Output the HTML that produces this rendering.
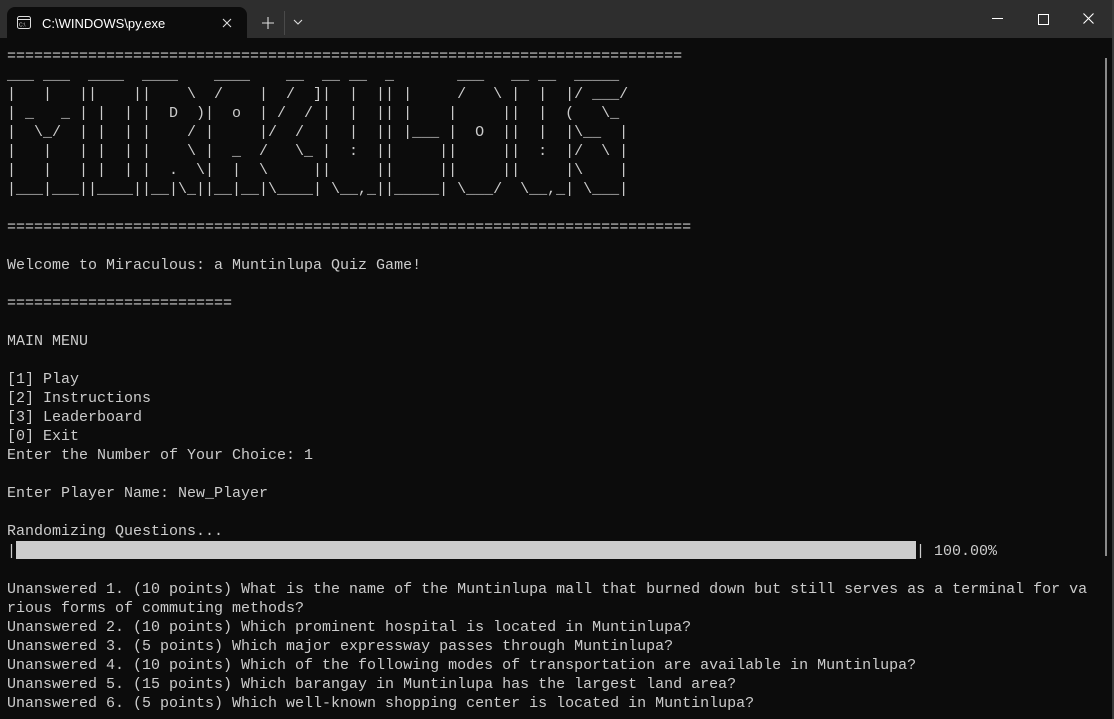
<!DOCTYPE html>
<html><head><meta charset="utf-8"><style>
html,body{margin:0;padding:0;background:#0c0c0c;width:1114px;height:719px;overflow:hidden}
.tb{position:absolute;left:0;top:0;width:1114px;height:38px;background:#2e2e2e}
.tab{position:absolute;left:7px;top:7px;width:240px;height:31px;background:#0c0c0c;border-radius:8px 8px 0 0}
.tt{position:absolute;left:42px;top:15px;font:13px "Liberation Sans",sans-serif;color:#fff}
pre{position:absolute;left:7px;top:47px;margin:0;font:15px/19px "Liberation Mono",monospace;color:#cccccc;white-space:pre}
.bar{display:inline-block;width:900px;height:18px;background:#cccccc;vertical-align:-4px}
</style></head><body>
<div class="tb">
<div class="tab">
<svg style="position:absolute;left:10px;top:9px" width="14" height="13" viewBox="0 0 14 13"><rect x="0.5" y="0.5" width="13" height="12" rx="2" fill="none" stroke="#ddd"/><line x1="1" y1="3.5" x2="13" y2="3.5" stroke="#ddd"/><text x="2" y="10.5" font-size="5" fill="#ddd" font-family="Liberation Sans">C:\</text></svg>
<div class="tt" style="left:35px;top:9px">C:\WINDOWS\py.exe</div>
<svg style="position:absolute;left:215px;top:11px" width="10" height="10"><path d="M1 1L9 9M9 1L1 9" stroke="#ddd" stroke-width="1.1"/></svg>
</div>
<svg style="position:absolute;left:262px;top:17px" width="12" height="12"><path d="M6 0V12M0 6H12" stroke="#ddd" stroke-width="1.1"/></svg>
<div style="position:absolute;left:284px;top:11px;width:1px;height:24px;background:#4a4a4a"></div>
<svg style="position:absolute;left:293px;top:19px" width="10" height="6"><path d="M1 1L5 5L9 1" stroke="#ddd" fill="none" stroke-width="1.1"/></svg>
<div style="position:absolute;left:992px;top:18px;width:11px;height:1px;background:#fff"></div>
<div style="position:absolute;left:1038px;top:14px;width:9px;height:9px;border:1px solid #fff"></div>
<svg style="position:absolute;left:1083px;top:13px" width="11" height="11"><path d="M0.5 0.5L10.5 10.5M10.5 0.5L0.5 10.5" stroke="#fff" stroke-width="1.1"/></svg>
</div>
<div style="position:absolute;left:1105px;top:58px;width:2px;height:498px;background:#8a8a8a"></div>
<div style="position:absolute;left:1112px;top:0;width:2px;height:719px;background:#3a3a3a"></div>
<pre>===========================================================================
___ ___  ____  ____    ____    __  __ __  _       ___   __ __  _____
|   |   ||    ||    \  /    |  /  ]|  |  || |     /   \ |  |  |/ ___/
| _   _ | |  | |  D  )|  o  | /  / |  |  || |    |     ||  |  (   \_ 
|  \_/  | |  | |    / |     |/  /  |  |  || |___ |  O  ||  |  |\__  |
|   |   | |  | |    \ |  _  /   \_ |  :  ||     ||     ||  :  |/  \ |
|   |   | |  | |  .  \|  |  \     ||     ||     ||     ||     |\    |
|___|___||____||__|\_||__|__|\____| \__,_||_____| \___/  \__,_| \___|

============================================================================

Welcome to Miraculous: a Muntinlupa Quiz Game!

=========================

MAIN MENU

[1] Play
[2] Instructions
[3] Leaderboard
[0] Exit
Enter the Number of Your Choice: 1

Enter Player Name: New_Player

Randomizing Questions...
|<span class="bar"></span>| 100.00%

Unanswered 1. (10 points) What is the name of the Muntinlupa mall that burned down but still serves as a terminal for va
rious forms of commuting methods?
Unanswered 2. (10 points) Which prominent hospital is located in Muntinlupa?
Unanswered 3. (5 points) Which major expressway passes through Muntinlupa?
Unanswered 4. (10 points) Which of the following modes of transportation are available in Muntinlupa?
Unanswered 5. (15 points) Which barangay in Muntinlupa has the largest land area?
Unanswered 6. (5 points) Which well-known shopping center is located in Muntinlupa?</pre>
</body></html>
